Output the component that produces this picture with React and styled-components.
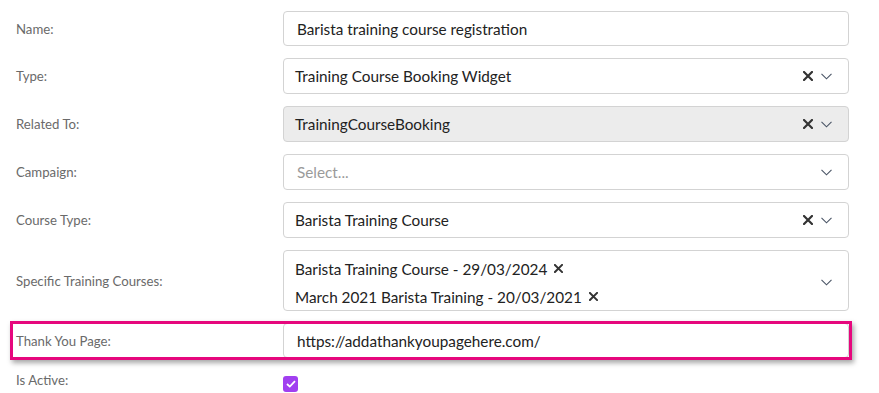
import React from "react";
import styled, { createGlobalStyle } from "styled-components";

const Global = createGlobalStyle`
  html, body { margin: 0; padding: 0; background: #fff; }
  body { font-family: Lato, "Noto Sans", sans-serif; }
`;

const Form = styled.div`
  display: flex;
  flex-direction: column;
  gap: 12px;
  padding: 11px 30px 0 16px;
`;

const Row = styled.div`
  position: relative;
  display: grid;
  grid-template-columns: 267px 1fr;
  align-items: ${(p) => (p.$top ? "start" : "center")};
  margin-top: ${(p) => p.$mt || 0}px;
  ${(p) =>
    p.$highlight &&
    `
    &::after {
      content: "";
      position: absolute;
      left: -6px;
      right: -3px;
      top: -2px;
      bottom: -2px;
      border: 3px solid #e6077d;
      box-shadow: 2px 3px 5px rgba(0,0,0,0.35);
      pointer-events: none;
    }
  `}
`;

const Label = styled.div`
  font-size: 13.2px;
  line-height: 16px;
  color: #6a6a6a;
`;

const Field = styled.div`
  box-sizing: border-box;
  min-height: ${(p) => p.$h || 36}px;
  border: 1px solid #d3d3d3;
  border-radius: 4px;
  background: ${(p) => (p.$disabled ? "#ececec" : "#fff")};
  display: flex;
  align-items: center;
  padding: ${(p) => p.$pt || 0}px 16px 0 ${(p) => p.$pl ?? 12}px;
  font-size: 15.3px;
  color: #222;
`;

const Value = styled.div`
  flex: 1;
  display: flex;
  flex-direction: column;
  gap: 10px;
  color: ${(p) => (p.$placeholder ? "#9a9a9a" : "#222")};
  padding-left: ${(p) => p.$pl || 0}px;
`;

const Chip = styled.div`
  display: flex;
  align-items: center;
  gap: 7px;
`;

const Icons = styled.div`
  display: flex;
  align-items: center;
  gap: 8px;
`;

const Check = styled.div`
  width: 15px;
  height: 16px;
  margin-top: 4px;
  border-radius: 3px;
  background: #a13ff0;
  display: flex;
  align-items: center;
  justify-content: center;
`;

const Cross = ({ size = 10 }) => (
  <svg width={size} height={size} viewBox="0 0 10 10">
    <path d="M1 1 L9 9 M9 1 L1 9" stroke="#333" strokeWidth="2.2" strokeLinecap="square" />
  </svg>
);

const Chevron = () => (
  <svg width="11" height="7" viewBox="0 0 11 7">
    <path d="M0.5 0.8 L5.5 5.8 L10.5 0.8" stroke="#4a5566" strokeWidth="1.1" fill="none" />
  </svg>
);

const Select = ({ children, clear, disabled, placeholder, h, pt }) => (
  <Field $disabled={disabled} $h={h} $pt={pt} $pl={11}>
    <Value $placeholder={placeholder}>{children}</Value>
    <Icons>
      {clear && <Cross />}
      <Chevron />
    </Icons>
  </Field>
);

export default function App() {
  return (
    <>
      <Global />
      <Form>
        <Row>
          <Label>Name:</Label>
          <Field $h={35}>
            <Value $pl={1}>Barista training course registration</Value>
          </Field>
        </Row>
        <Row>
          <Label>Type:</Label>
          <Select clear>Training Course Booking Widget</Select>
        </Row>
        <Row>
          <Label>Related To:</Label>
          <Select clear disabled>TrainingCourseBooking</Select>
        </Row>
        <Row>
          <Label>Campaign:</Label>
          <Select placeholder>
            <span style={{ paddingLeft: 2 }}>Select...</span>
          </Select>
        </Row>
        <Row>
          <Label>Course Type:</Label>
          <Select clear>Barista Training Course</Select>
        </Row>
        <Row>
          <Label>Specific Training Courses:</Label>
          <Select h={61} pt={4}>
            <Chip>
              Barista Training Course - 29/03/2024 <Cross size={9} />
            </Chip>
            <Chip>
              March 2021 Barista Training - 20/03/2021 <Cross size={9} />
            </Chip>
          </Select>
        </Row>
        <Row $highlight>
          <Label>Thank You Page:</Label>
          <Field $h={35}>
            <Value $pl={1}>https://addathankyoupagehere.com/</Value>
          </Field>
        </Row>
        <Row $mt={2} $top>
          <Label>Is Active:</Label>
          <Check>
            <svg width="10" height="8" viewBox="0 0 10 8">
              <path d="M1 4 L3.8 6.6 L9 1.2" stroke="#fff" strokeWidth="1.8" fill="none" />
            </svg>
          </Check>
        </Row>
      </Form>
    </>
  );
}
